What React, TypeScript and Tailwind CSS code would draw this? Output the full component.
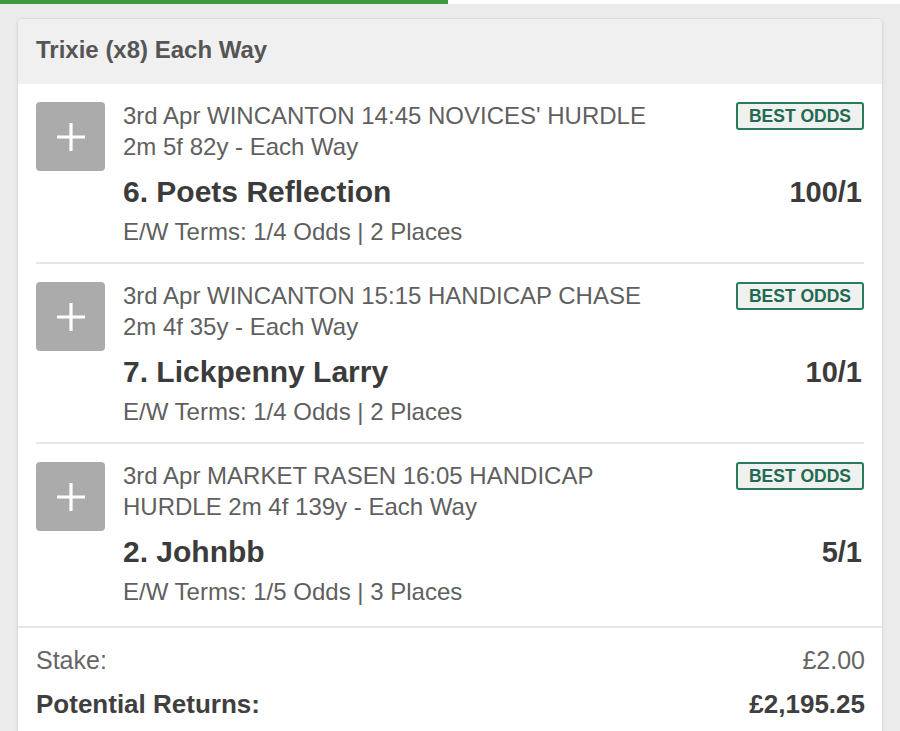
import React from "react";

type Leg = {
  meta: string;
  name: string;
  odds: string;
  terms: string;
};

const legs: Leg[] = [
  {
    meta: "3rd Apr WINCANTON 14:45 NOVICES' HURDLE 2m 5f 82y - Each Way",
    name: "6. Poets Reflection",
    odds: "100/1",
    terms: "E/W Terms: 1/4 Odds | 2 Places",
  },
  {
    meta: "3rd Apr WINCANTON 15:15 HANDICAP CHASE 2m 4f 35y - Each Way",
    name: "7. Lickpenny Larry",
    odds: "10/1",
    terms: "E/W Terms: 1/4 Odds | 2 Places",
  },
  {
    meta: "3rd Apr MARKET RASEN 16:05 HANDICAP HURDLE 2m 4f 139y - Each Way",
    name: "2. Johnbb",
    odds: "5/1",
    terms: "E/W Terms: 1/5 Odds | 3 Places",
  },
];

function PlusBox() {
  return (
    <div className="flex h-[69px] w-[69px] shrink-0 items-center justify-center rounded-[4px] bg-[#ababab]">
      <svg width="32" height="32" viewBox="0 0 32 32">
        <path d="M16 2 V30 M2 16 H30" stroke="#ffffff" strokeWidth="3.2" />
      </svg>
    </div>
  );
}

function LegRow({ leg, last }: { leg: Leg; last: boolean }) {
  return (
    <div className={last ? "" : "border-b-2 border-[#e6e6e6]"}>
      <div className={last ? "flex pt-[18px] pb-[19px]" : "flex pt-[18px] pb-[15px]"}>
        <PlusBox />
        <div className="ml-[18px] flex min-w-0 flex-1 flex-col">
          <div className="flex items-start justify-between">
            <div className="-mt-[2px] w-[540px] text-[24px] leading-[31px] text-[#5f5f5f]">
              {leg.meta}
            </div>
            <div className="flex h-[28px] w-[128px] shrink-0 items-center justify-center rounded-[3px] border-2 border-[#2a7a5c] bg-[#eef1ef] text-[17.5px] font-bold text-[#23694f]">
              BEST ODDS
            </div>
          </div>
          <div className="mt-[12px] flex items-center justify-between">
            <div className="text-[30px] font-bold leading-[36px] text-[#3b3b3b]">
              {leg.name}
            </div>
            <div className="pr-[2px] text-[29px] font-bold leading-[36px] text-[#3b3b3b]">
              {leg.odds}
            </div>
          </div>
          <div className="mt-[6px] text-[24px] leading-[31px] text-[#5f5f5f]">
            {leg.terms}
          </div>
        </div>
      </div>
    </div>
  );
}

export default function App() {
  return (
    <div
      className="min-h-[731px] w-[900px] overflow-hidden bg-[#ebebeb]"
      style={{ fontFamily: '"Liberation Sans", Arial, sans-serif' }}
    >
      <div className="flex h-[4px]">
        <div className="w-[448px] bg-[#3b9a3f]" />
        <div className="flex-1 bg-white" />
      </div>
      <div className="px-[17px] pt-[14px]">
        <div className="overflow-hidden rounded-[5px] border border-[#dcdcdc] bg-white shadow-[0_1px_3px_rgba(0,0,0,0.08)]">
          <div className="flex h-[65px] items-center bg-[#f0f0f0] px-[18px]">
            <div className="-mt-[3px] text-[24px] font-bold text-[#555555]">
              Trixie (x8) Each Way
            </div>
          </div>
          <div className="px-[18px]">
            {legs.map((leg, i) => (
              <LegRow key={i} leg={leg} last={i === legs.length - 1} />
            ))}
          </div>
          <div className="border-t-2 border-[#e6e6e6] pl-[18px] pr-[17px] pt-[17px] pb-[20px]">
            <div className="flex items-center justify-between text-[25px] leading-[31px] text-[#666666]">
              <span>Stake:</span>
              <span>£2.00</span>
            </div>
            <div className="mt-[13px] flex items-center justify-between text-[26px] font-bold leading-[31px] text-[#3f3f3f]">
              <span>Potential Returns:</span>
              <span>£2,195.25</span>
            </div>
          </div>
        </div>
      </div>
    </div>
  );
}
